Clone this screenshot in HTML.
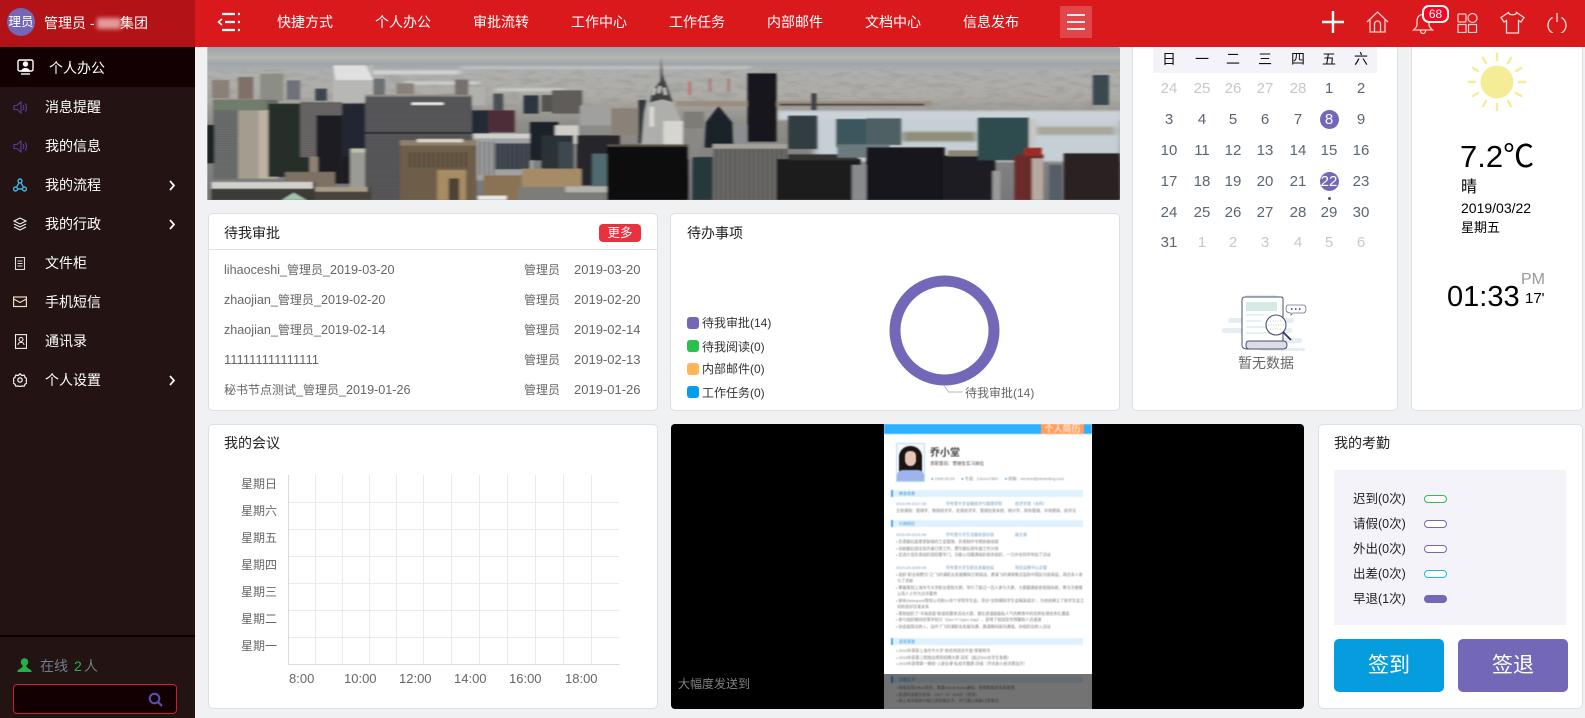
<!DOCTYPE html>
<html lang="zh-CN"><head><meta charset="utf-8"><title>个人办公</title>
<style>
*{box-sizing:border-box;margin:0;padding:0}
html,body{width:1585px;height:718px;overflow:hidden;background:#f0f1f3}
body{position:relative;font-family:"Liberation Sans","Noto Sans CJK SC",sans-serif;font-size:14px;color:#000}
.t{position:absolute;white-space:nowrap;line-height:20px;height:20px}
.a{position:absolute}
.card{position:absolute;background:#fff;border:1px solid #dcdfe3;border-radius:5px}
.side{color:#fff;font-size:14px}
.nav{color:#fff;font-size:14px;top:12px}
.g{color:#666;font-size:12.6px}.g i{font-style:normal;font-size:12px}
.c{position:absolute;width:32px;text-align:center;font-size:15px;line-height:20px;height:20px;color:#5b6670}
.o{color:#c8c8c8}
.h{color:#111}
.pill{position:absolute;left:1424px;width:23px;height:8px;border-radius:4px;border:1px solid;background:#fff}
.k{position:absolute;left:1353px;font-size:12.5px;line-height:20px;color:#222;white-space:nowrap}
.yl{position:absolute;left:241px;font-size:12px;color:#666;line-height:20px;white-space:nowrap}
.xl{position:absolute;top:669px;font-size:13px;color:#666;line-height:20px}
.leg{position:absolute;left:687px;width:12px;height:12px;border-radius:3px}
.legt{position:absolute;left:702px;font-size:12px;color:#333;line-height:20px;white-space:nowrap}
.r{position:absolute;font-size:4px;line-height:6px;color:#777;white-space:nowrap}
.sec{position:absolute;left:7px;width:192px;height:7px;background:#dff1fd;border-left:2px solid #43a8ee;color:#3d93d6;font-size:4px;line-height:7px;padding-left:6px}
</style></head><body>

<!-- banner -->
<svg class="a" style="left:205px;top:45px" width="915" height="155" viewBox="0 0 1577 465" preserveAspectRatio="none">
<defs>
<linearGradient id="sky" x1="0" y1="0" x2="0" y2="1"><stop offset="0" stop-color="#9da3a7"/><stop offset=".07" stop-color="#b4b6b4"/><stop offset=".11" stop-color="#a0a5a8"/><stop offset=".16" stop-color="#aeb0af"/><stop offset=".32" stop-color="#aeaca6"/><stop offset=".5" stop-color="#8f8d88"/><stop offset="1" stop-color="#77767a"/></linearGradient>
<filter id="nz" x="0" y="0" width="100%" height="100%"><feTurbulence type="fractalNoise" baseFrequency=".035 .07" numOctaves="3" seed="4"/><feColorMatrix values="0 0 0 0 .3  0 0 0 0 .28  0 0 0 0 .26  3 0 0 0 -1.300"/><feGaussianBlur stdDeviation="1.500 1"/></filter>
<filter id="bl"><feGaussianBlur stdDeviation="2.400 1.400"/></filter>
<filter id="bl2"><feGaussianBlur stdDeviation="6 3"/></filter>
<pattern id="st" width="6" height="7" patternUnits="userSpaceOnUse"><rect width="6" height="2.500" fill="#000" opacity=".22"/></pattern>
<pattern id="vs" width="8" height="6" patternUnits="userSpaceOnUse"><rect width="3" height="6" fill="#000" opacity=".3"/></pattern>
</defs>
<rect x="2" y="6" width="1575" height="459" rx="4" fill="url(#sky)"/>
<rect x="2" y="72" width="1575" height="130" fill="#000" filter="url(#nz)" opacity=".4"/>
<g filter="url(#bl2)"><rect x="280" y="76" width="160" height="12" fill="#d3d5d5"/><rect x="440" y="64" width="500" height="8" fill="#c4c5c2"/><rect x="345" y="110" width="130" height="8" fill="#d0d4d4"/><rect x="500" y="130" width="120" height="8" fill="#d0d2d0"/><rect x="985" y="197" width="600" height="28" fill="#cbd3d8"/><rect x="1050" y="225" width="530" height="125" fill="#c5cfd4"/><rect x="1200" y="260" width="130" height="30" fill="#8e8f78"/><rect x="1430" y="245" width="140" height="25" fill="#a9a79b"/></g>
<g filter="url(#bl)">
<rect x="812" y="168" width="440" height="16" fill="#9b8f82"/><rect x="990" y="176" width="250" height="6" fill="#454b49"/><rect x="1045" y="145" width="9" height="50" fill="#3a4044"/>
<rect x="57" y="96" width="26" height="66" fill="#7f7068"/><rect x="95" y="86" width="40" height="82" fill="#8c8e85"/><rect x="141" y="106" width="23" height="58" fill="#6e7178"/><rect x="190" y="131" width="20" height="36" fill="#3c4550"/><rect x="12" y="105" width="30" height="55" fill="#8a8078"/>
<rect x="221" y="61" width="69" height="110" fill="#b7b8b6"/><path d="M221 61h56l13 44h-65z" fill="#e0e0e0"/>
<rect x="290" y="101" width="20" height="50" fill="#6d6f73"/><rect x="330" y="115" width="30" height="32" fill="#8a807a"/><rect x="431" y="104" width="23" height="48" fill="#74706e"/><rect x="454" y="126" width="29" height="55" fill="#b2b0ac"/>
<rect x="497" y="146" width="17" height="50" fill="#4a4f55"/><rect x="549" y="151" width="26" height="55" fill="#2f3640"/><rect x="580" y="150" width="18" height="50" fill="#55524f"/><rect x="598" y="136" width="52" height="70" fill="#5f5c5a"/><rect x="646" y="181" width="55" height="60" fill="#a0a09e"/><rect x="700" y="190" width="48" height="80" fill="#8a8278"/>
<rect x="14" y="164" width="112" height="237" fill="#6f7272"/><rect x="14" y="164" width="112" height="237" fill="url(#st)"/><rect x="57" y="195" width="50" height="206" fill="#a39c8f"/><rect x="92" y="195" width="34" height="206" fill="#bcb2a0"/><rect x="14" y="164" width="92" height="32" fill="#6f7c6c"/>
<rect x="2" y="240" width="14" height="115" fill="#1e2024"/>
<rect x="109" y="176" width="81" height="220" fill="#262d2a"/>
<rect x="164" y="171" width="72" height="165" fill="#6e6b6a"/><rect x="164" y="171" width="72" height="165" fill="url(#st)"/>
<rect x="192" y="211" width="44" height="205" fill="#1b1e22"/><rect x="236" y="176" width="43" height="160" fill="#222630"/><rect x="236" y="336" width="16" height="80" fill="#1b1e22"/>
<rect x="250" y="311" width="37" height="115" fill="#9a9b95"/><rect x="252" y="311" width="30" height="12" fill="#b9c2a8"/>
<rect x="180" y="335" width="15" height="55" fill="#8f8071"/><rect x="138" y="381" width="86" height="45" fill="#7d7163"/>
<rect x="276" y="151" width="184" height="314" fill="#5c5c5e"/><rect x="276" y="151" width="184" height="314" fill="url(#st)"/><rect x="276" y="149" width="184" height="6" fill="#8f8a80"/><rect x="276" y="262" width="184" height="4" fill="#1e1e20"/><rect x="356" y="172" width="55" height="8" fill="#e6e6e6"/>
<rect x="460" y="196" width="30" height="70" fill="#232a34"/><rect x="488" y="196" width="46" height="66" fill="#4d2f37"/>
<rect x="463" y="266" width="103" height="140" fill="#a0a2a3"/><rect x="463" y="266" width="103" height="14" fill="#cfcfcb"/><rect x="500" y="295" width="60" height="78" fill="#2f3a42" opacity=".8"/><rect x="500" y="295" width="60" height="78" fill="url(#vs)"/><rect x="463" y="290" width="37" height="100" fill="url(#vs)"/>
<rect x="560" y="231" width="49" height="115" fill="#1f242c"/><rect x="603" y="241" width="41" height="55" fill="#cfcdc6"/><rect x="580" y="271" width="55" height="105" fill="#2a3036"/><rect x="609" y="290" width="26" height="80" fill="#3e4750"/>
<rect x="641" y="271" width="74" height="150" fill="#25272b"/><rect x="667" y="326" width="28" height="100" fill="#4f6a70"/>
<rect x="336" y="286" width="132" height="179" fill="#6d5d49"/><rect x="336" y="286" width="132" height="16" fill="#8d7f6c"/><rect x="365" y="282" width="80" height="10" fill="#d7d2c8"/><rect x="350" y="322" width="105" height="45" fill="url(#vs)"/><rect x="400" y="375" width="50" height="90" fill="#a68c62"/><rect x="420" y="400" width="18" height="65" fill="#4e4234"/>
<rect x="480" y="391" width="89" height="74" fill="#8a7355"/><rect x="546" y="371" width="103" height="60" fill="#a58c66"/><rect x="540" y="426" width="201" height="39" fill="#7c7c7a"/><rect x="621" y="424" width="120" height="18" fill="#b4b2ac"/>
<rect x="470" y="452" width="50" height="13" fill="#e8e8e4"/>
<rect x="747" y="165" width="22" height="130" fill="#33373b"/>
<path d="M786 36l3 55 9 40 8 40 16 60v72H752l5-100 10-80 14-32z" fill="#aeaeac"/><path d="M786 36l3 55 9 40 8 40-18 -8-22 10 4-33 14-32z" fill="#3f4242"/><path d="M772 150l4-20M782 145l2-22M794 150l-3-22" stroke="#c8c8c4" stroke-width="5"/><rect x="790" y="228" width="34" height="70" fill="#d6d5d0"/><rect x="766" y="185" width="8" height="60" fill="#d8d8d4"/>
<rect x="828" y="246" width="22" height="95" fill="#8a8885"/><rect x="825" y="200" width="35" height="50" fill="#7e7c76"/>
<path d="M885 183l24 50 2 75h-50l2-75z" fill="#1e2229"/>
<rect x="935" y="85" width="50" height="205" fill="#15181c"/><rect x="833" y="110" width="5" height="40" fill="#c85a5a" opacity=".7"/><rect x="868" y="100" width="5" height="40" fill="#a96a6a" opacity=".7"/><rect x="900" y="100" width="5" height="40" fill="#a96a6a" opacity=".7"/>
<rect x="1005" y="212" width="50" height="100" fill="#303c42"/><rect x="912" y="240" width="22" height="60" fill="#8b8d90"/>
<rect x="1088" y="222" width="52" height="85" fill="#3a565b"/><rect x="1140" y="220" width="60" height="80" fill="#4f6165"/>
<rect x="693" y="301" width="140" height="164" fill="#0e0e11"/><rect x="693" y="298" width="140" height="7" fill="#57534a"/>
<rect x="840" y="336" width="36" height="129" fill="#25393a"/>
<rect x="875" y="297" width="128" height="168" fill="#6f6e6c"/><rect x="875" y="297" width="128" height="168" fill="url(#vs)"/><rect x="875" y="297" width="128" height="14" fill="#a5a29a"/>
<rect x="985" y="342" width="145" height="123" fill="#1b1b1d"/><rect x="1005" y="328" width="120" height="18" fill="#32302e"/><rect x="1090" y="298" width="90" height="40" fill="#6c7a7e"/><rect x="1115" y="360" width="25" height="105" fill="#888b8e"/>
<rect x="1140" y="307" width="135" height="158" fill="#15161a"/><rect x="1272" y="332" width="90" height="133" fill="#1d1e22"/><rect x="1280" y="316" width="55" height="18" fill="#8c8678"/><rect x="1357" y="378" width="14" height="87" fill="#9a9a9a"/>
<rect x="1332" y="218" width="88" height="128" fill="#2d4c4e"/><rect x="1420" y="222" width="12" height="105" fill="#c5c7c4"/>
<rect x="1395" y="328" width="50" height="137" fill="#6a2c2c"/><rect x="1412" y="308" width="30" height="25" fill="#9c2b25"/><rect x="1425" y="340" width="20" height="125" fill="#b5a9a0"/>
<rect x="1455" y="360" width="22" height="105" fill="#555d66"/><rect x="1480" y="325" width="97" height="140" fill="#2a2224"/><rect x="1530" y="90" width="28" height="90" fill="#3b4a50"/>
<rect x="11" y="411" width="179" height="54" fill="#3a3a38"/><rect x="11" y="411" width="175" height="20" fill="#d2d0ca"/><rect x="190" y="426" width="97" height="39" fill="#4a423a"/><rect x="190" y="426" width="90" height="14" fill="#a89c88"/>
<path d="M132 465l21-22 22 22z" fill="#a3c3a9"/>
</g>
<rect x="0" y="6" width="4" height="459" fill="#f0f1f3"/>
</svg>

<!-- sidebar -->
<div class="a" style="left:0;top:0;width:195px;height:718px;background:#231313"></div>
<div class="a" style="left:0;top:47px;width:195px;height:40px;background:#120002"></div>
<div class="a" style="left:0;top:635px;width:195px;height:2px;background:#120002"></div>

<!-- top bar -->
<div class="a" style="left:195px;top:0;width:1390px;height:47px;background:#da191d"></div>
<div class="a" style="left:0;top:0;width:195px;height:47px;background:#b31317"></div>
<div class="a" style="left:7px;top:8px;width:28px;height:28px;border-radius:50%;background:#7367b8;color:#fff;font-size:12.5px;line-height:28px;text-align:center;white-space:nowrap">理员</div>
<div class="t" style="left:44px;top:13px;color:#fff;font-size:14px">管理员 -</div>
<div class="a" style="left:97px;top:18px;width:24px;height:11px;background:#e49a9a;filter:blur(2px)"></div>
<div class="t" style="left:120px;top:13px;color:#fff;font-size:14px">集团</div>

<svg class="a" style="left:217px;top:12px" width="24" height="20" viewBox="0 0 24 20" fill="none" stroke="#fff" stroke-width="2.200"><path d="M5 2h13M8 10h10M5 18h13M21 2h2M21 10h2M21 18h2"/><path d="M5 7l-3.500 3L5 13" stroke-width="1.600"/></svg>
<div class="t nav" style="left:277px">快捷方式</div><div class="t nav" style="left:375px">个人办公</div><div class="t nav" style="left:473px">审批流转</div><div class="t nav" style="left:571px">工作中心</div><div class="t nav" style="left:669px">工作任务</div><div class="t nav" style="left:767px">内部邮件</div><div class="t nav" style="left:865px">文档中心</div><div class="t nav" style="left:963px">信息发布</div>
<div class="a" style="left:1060px;top:6px;width:32px;height:32px;background:rgba(255,255,255,.2)"></div>
<svg class="a" style="left:1066px;top:13px" width="20" height="18" fill="none" stroke="#fff" stroke-width="1.700"><path d="M1 2h18M1 9h18M1 16h18"/></svg>
<svg class="a" style="left:1322px;top:11px" width="22" height="22" stroke="#fff" stroke-width="2.400"><path d="M0 11h22M11 0v22"/></svg>
<svg class="a" style="left:1366px;top:11px" width="23" height="22" viewBox="0 0 23 22" fill="none" stroke="#f7cfd0" stroke-width="1.300"><path d="M1 11L11.500 1 22 11M4 8.500V21h15V8.500M8.500 21v-8a3 3 0 0 1 6 0v8"/></svg>
<svg class="a" style="left:1412px;top:12px" width="22" height="23" viewBox="0 0 22 23" fill="none" stroke="#f7cfd0" stroke-width="1.300"><path d="M11 2.500c-4 0-6 3-6 6.500v4c0 2-2 3.500-3.500 5h19c-1.500-1.500-3.500-3-3.500-5V9c0-3.500-2-6.500-6-6.500zM8.500 18.500c0 4 5 4 5 0"/></svg>
<div class="a" style="left:1422px;top:5px;width:27px;height:18px;background:#ff0022;border:2px solid #fff;border-radius:7px;color:#fff;font-size:12px;line-height:14px;text-align:center">68</div>
<svg class="a" style="left:1457px;top:12px" width="21" height="21" fill="none" stroke="#f7cfd0" stroke-width="1.200"><rect x="1" y="2" width="8" height="8" rx="1"/><circle cx="15.500" cy="6" r="4.500"/><rect x="1" y="12.500" width="8" height="8"/><rect x="11.500" y="12.500" width="8" height="8"/></svg>
<svg class="a" style="left:1500px;top:11px" width="25" height="23" viewBox="0 0 25 23" fill="none" stroke="#f9dcdc" stroke-width="1.300"><path d="M8.500 1.500L1 6.500l3 4.500 2.500-1.500V22h12V9.500L21 11l3-4.500-7.500-5c-.5 3-7.500 3-8 0z"/></svg>
<svg class="a" style="left:1547px;top:12px" width="20" height="21" fill="none" stroke="#f9dcdc" stroke-width="1.300"><path d="M5.500 5.500a9 9 0 1 0 9 0M10 1v9"/></svg>

<!-- side menu -->
<svg class="a" style="left:17px;top:59px" width="17" height="16" fill="none" stroke="#fff" stroke-width="1.400"><rect x="1" y="1" width="15" height="11" rx="1.500"/><circle cx="8.500" cy="5" r="2" fill="#fff"/><path d="M5 12c0-3 7-3 7 0z" fill="#fff"/><path d="M4 15h9"/></svg>
<div class="t side" style="left:49px;top:58px">个人办公</div>
<svg class="a" style="left:13px;top:101px" width="15" height="13" fill="none" stroke="#5a3d9c" stroke-width="1.100"><path d="M1 4.500h3L8 1v11L4 8.500H1zM10 4c1 1.500 1 3.500 0 5M12 2.500c2 2 2 6 0 8"/></svg>
<div class="t side" style="left:45px;top:97px">消息提醒</div>
<svg class="a" style="left:13px;top:140px" width="15" height="13" fill="none" stroke="#5a3d9c" stroke-width="1.100"><path d="M1 4.500h3L8 1v11L4 8.500H1zM10 4c1 1.500 1 3.500 0 5M12 2.500c2 2 2 6 0 8"/></svg>
<div class="t side" style="left:45px;top:136px">我的信息</div>
<svg class="a" style="left:13px;top:178px" width="14" height="14" fill="none" stroke="#3fb4e8" stroke-width="1.400"><path d="M7 3L2.500 11h9z"/><circle cx="7" cy="3" r="2" fill="#231313"/><circle cx="2.500" cy="11" r="2" fill="#231313"/><circle cx="11.500" cy="11" r="2" fill="#231313"/></svg>
<div class="t side" style="left:45px;top:175px">我的流程</div>
<svg class="a" style="left:168px;top:180px" width="8" height="11" fill="none" stroke="#fff" stroke-width="1.700"><path d="M2 1l4 4.500L2 10"/></svg>
<svg class="a" style="left:13px;top:217px" width="14" height="14" fill="none" stroke="#eee" stroke-width="1.100"><path d="M7 1l6 3-6 3-6-3zM1 7l6 3 6-3M1 10l6 3 6-3"/></svg>
<div class="t side" style="left:45px;top:214px">我的行政</div>
<svg class="a" style="left:168px;top:219px" width="8" height="11" fill="none" stroke="#fff" stroke-width="1.700"><path d="M2 1l4 4.500L2 10"/></svg>
<svg class="a" style="left:14px;top:257px" width="12" height="13" fill="none" stroke="#ddd" stroke-width="1.100"><rect x="1.500" y=".5" width="9" height="12"/><path d="M3.500 4h5M3.500 6.500h5M3.500 9h5"/></svg>
<div class="t side" style="left:45px;top:253px">文件柜</div>
<svg class="a" style="left:13px;top:296px" width="14" height="12" fill="none" stroke="#f0dcc0" stroke-width="1.200"><rect x=".6" y="1" width="12.800" height="9.500"/><path d="M.6 3l6.400 3.500L13.400 3"/></svg>
<div class="t side" style="left:45px;top:292px">手机短信</div>
<svg class="a" style="left:14px;top:334px" width="13" height="15" fill="none" stroke="#eee" stroke-width="1.100"><rect x="1.500" y=".6" width="11" height="13.800"/><circle cx="7" cy="5.500" r="2"/><path d="M4 11c0-3.500 6-3.500 6 0"/></svg>
<div class="t side" style="left:45px;top:331px">通讯录</div>
<svg class="a" style="left:13px;top:373px" width="14" height="14" fill="none" stroke="#eee" stroke-width="1.300"><path d="M7 .8l1.800 1.600 2.400-.2.900 2.200L14 5.800 13.200 8l.8 1.700-1.900 1.500-.9 1.900-2.400-.1L7 13.600 5.200 13l-2.400.1-.9-1.900L0 9.700.8 8 0 5.800l1.900-1.400.9-2.200 2.400.2z"/><circle cx="7" cy="7" r="2.200"/></svg>
<div class="t side" style="left:45px;top:370px">个人设置</div>
<svg class="a" style="left:168px;top:375px" width="8" height="11" fill="none" stroke="#fff" stroke-width="1.700"><path d="M2 1l4 4.500L2 10"/></svg>

<svg class="a" style="left:17px;top:658px" width="15" height="14" fill="#22b14c"><circle cx="7.500" cy="4" r="3.800"/><path d="M5.500 6.500h4V9l5 3.500V14H.5v-1.500l5-3.500z"/></svg>
<div class="t" style="left:40px;top:656px;color:#6f7e8c;font-size:14px">在线</div>
<div class="t" style="left:74px;top:656px;color:#22b14c;font-size:14px">2</div>
<div class="t" style="left:84px;top:656px;color:#6f7e8c;font-size:14px">人</div>
<div class="a" style="left:13px;top:684px;width:164px;height:30px;background:#120002;border:1px solid #c8232c;border-radius:4px"></div>
<svg class="a" style="left:148px;top:692px" width="15" height="15" fill="none" stroke="#5c4fb0" stroke-width="2"><circle cx="6.500" cy="6.500" r="4.800"/><path d="M10 10l4 4"/></svg>

<!-- 待我审批 -->
<div class="card" style="left:208px;top:213px;width:450px;height:198px"></div>
<div class="t" style="left:224px;top:223px;font-size:14px;color:#222">待我审批</div>
<div class="a" style="left:208px;top:249px;width:450px;height:1px;background:#dcdfe3"></div>
<div class="a" style="left:599px;top:224px;width:42px;height:18px;background:#e8333e;border-radius:4px;color:#fff;font-size:12.500px;line-height:18px;text-align:center">更多</div>
<div class="t g" style="left:224px;top:260px">lihaoceshi_<i>管理员</i>_2019-03-20</div><div class="t g" style="left:524px;top:260px"><i>管理员</i></div><div class="t g" style="left:574px;top:260px;font-size:13px">2019-03-20</div>
<div class="t g" style="left:224px;top:290px">zhaojian_<i>管理员</i>_2019-02-20</div><div class="t g" style="left:524px;top:290px"><i>管理员</i></div><div class="t g" style="left:574px;top:290px;font-size:13px">2019-02-20</div>
<div class="t g" style="left:224px;top:320px">zhaojian_<i>管理员</i>_2019-02-14</div><div class="t g" style="left:524px;top:320px"><i>管理员</i></div><div class="t g" style="left:574px;top:320px;font-size:13px">2019-02-14</div>
<div class="t g" style="left:224px;top:350px;font-size:13px">111111111111111</div><div class="t g" style="left:524px;top:350px"><i>管理员</i></div><div class="t g" style="left:574px;top:350px;font-size:13px">2019-02-13</div>
<div class="t g" style="left:224px;top:380px"><i>秘书节点测试</i>_<i>管理员</i>_2019-01-26</div><div class="t g" style="left:524px;top:380px"><i>管理员</i></div><div class="t g" style="left:574px;top:380px;font-size:13px">2019-01-26</div>

<!-- 待办事项 -->
<div class="card" style="left:670px;top:213px;width:450px;height:198px"></div>
<div class="t" style="left:687px;top:223px;font-size:14px;color:#222">待办事项</div>
<div class="leg" style="top:317px;background:#7367b8"></div><div class="legt" style="top:313px">待我审批(14)</div>
<div class="leg" style="top:340px;background:#28c04e"></div><div class="legt" style="top:337px">待我阅读(0)</div>
<div class="leg" style="top:363px;background:#ffb653"></div><div class="legt" style="top:359px">内部邮件(0)</div>
<div class="leg" style="top:386px;background:#069ded"></div><div class="legt" style="top:383px">工作任务(0)</div>
<svg class="a" style="left:885px;top:270px" width="120" height="125" fill="none"><circle cx="59.500" cy="60.500" r="49.500" stroke="#7367b8" stroke-width="11"/><path d="M59.500 116l4 6h14" stroke="#b9b3dc" stroke-width="1"/></svg>
<div class="t" style="left:965px;top:383px;font-size:12px;color:#666">待我审批(14)</div>

<!-- calendar -->
<div class="card" style="left:1132px;top:47px;width:266px;height:364px;border-top:0;border-radius:0 0 5px 5px"></div>
<div class="a" style="left:1153px;top:47px;width:224px;height:26px;background:#f3f3f9"></div>
<div class="c h" style="left:1153px;top:49px;font-size:14px">日</div><div class="c h" style="left:1186px;top:49px;font-size:14px">一</div><div class="c h" style="left:1217px;top:49px;font-size:14px">二</div><div class="c h" style="left:1249px;top:49px;font-size:14px">三</div><div class="c h" style="left:1282px;top:49px;font-size:14px">四</div><div class="c h" style="left:1313px;top:49px;font-size:14px">五</div><div class="c h" style="left:1345px;top:49px;font-size:14px">六</div>

<div class="c o" style="left:1153px;top:79px">24</div><div class="c o" style="left:1186px;top:79px">25</div><div class="c o" style="left:1217px;top:79px">26</div><div class="c o" style="left:1249px;top:79px">27</div><div class="c o" style="left:1282px;top:79px">28</div><div class="c" style="left:1313px;top:79px">1</div><div class="c" style="left:1345px;top:79px">2</div>
<div class="c" style="left:1153px;top:110px">3</div><div class="c" style="left:1186px;top:110px">4</div><div class="c" style="left:1217px;top:110px">5</div><div class="c" style="left:1249px;top:110px">6</div><div class="c" style="left:1282px;top:110px">7</div>
<div class="a" style="left:1319.500px;top:109.500px;width:19px;height:19px;border-radius:50%;background:#7367b8;color:#fff;text-align:center;font-size:15px;line-height:19px">8</div><div class="c" style="left:1345px;top:110px">9</div>
<div class="c" style="left:1153px;top:141px">10</div><div class="c" style="left:1186px;top:141px">11</div><div class="c" style="left:1217px;top:141px">12</div><div class="c" style="left:1249px;top:141px">13</div><div class="c" style="left:1282px;top:141px">14</div><div class="c" style="left:1313px;top:141px">15</div><div class="c" style="left:1345px;top:141px">16</div>
<div class="c" style="left:1153px;top:172px">17</div><div class="c" style="left:1186px;top:172px">18</div><div class="c" style="left:1217px;top:172px">19</div><div class="c" style="left:1249px;top:172px">20</div><div class="c" style="left:1282px;top:172px">21</div>
<div class="a" style="left:1319.500px;top:171.500px;width:19px;height:19px;border-radius:50%;background:#7367b8;color:#fff;text-align:center;font-size:15px;line-height:19px">22</div><div class="c" style="left:1345px;top:172px">23</div>
<div class="a" style="left:1327.500px;top:197px;width:3px;height:3px;border-radius:50%;background:#555"></div>
<div class="c" style="left:1153px;top:203px">24</div><div class="c" style="left:1186px;top:203px">25</div><div class="c" style="left:1217px;top:203px">26</div><div class="c" style="left:1249px;top:203px">27</div><div class="c" style="left:1282px;top:203px">28</div><div class="c" style="left:1313px;top:203px">29</div><div class="c" style="left:1345px;top:203px">30</div>
<div class="c" style="left:1153px;top:233px">31</div><div class="c o" style="left:1186px;top:233px">1</div><div class="c o" style="left:1217px;top:233px">2</div><div class="c o" style="left:1249px;top:233px">3</div><div class="c o" style="left:1282px;top:233px">4</div><div class="c o" style="left:1313px;top:233px">5</div><div class="c o" style="left:1345px;top:233px">6</div>

<svg class="a" style="left:1220px;top:290px" width="90" height="64" fill="none">
<g fill="#e4eef1"><rect x="25" y="5" width="32" height="3" rx="1.500"/><rect x="8" y="28" width="66" height="5" rx="2.500"/><rect x="2" y="38" width="70" height="5" rx="2.500"/><rect x="60" y="48" width="22" height="5" rx="2.500"/><rect x="40" y="58" width="40" height="3" rx="1.500"/><rect x="80" y="58" width="5" height="3" rx="1.500"/></g>
<path d="M22 10q0-3 3-3h36q2 0 2 2v50H27q-5 0-5-4z" fill="#fff" stroke="#4a4f78" stroke-width="1"/>
<rect x="26" y="12" width="31" height="9" fill="#d5e9e5"/><path d="M26 25h18M26 31h15M26 37h22M26 43h28" stroke="#d5e9e5" stroke-width="1.300"/>
<path d="M29 59q-3 0-3-4t3-4h34q4 0 4 4t-4 4z" fill="#dcdce4" stroke="#4a4f78" stroke-width="1"/>
<circle cx="56" cy="35" r="10" fill="#fff" stroke="#4a4f78" stroke-width="1.100"/><path d="M50 31h12M48 35h16M50 39h12" stroke="#ccc" stroke-dasharray="1 1.500"/><path d="M63 42l8 8" stroke="#30345c" stroke-width="1.800"/>
<path d="M68 15h15q3 0 3 4t-3 4H73l-2 2v-2q-5 0-5-4t2-4z" fill="#fff" stroke="#6a6e90" stroke-width=".8"/><path d="M71 19h1.500M75 19h1.500M79 19h1.500" stroke="#30345c" stroke-width="1.500"/>
</svg>
<div class="t" style="left:1238px;top:353px;font-size:14px;color:#666">暂无数据</div>

<!-- weather -->
<div class="card" style="left:1411px;top:47px;width:172px;height:364px;border-top:0;border-radius:0 0 5px 5px"></div>
<svg class="a" style="left:1467px;top:52px" width="60" height="60" fill="none" stroke="#f5ec97" stroke-width="2.400" stroke-linecap="round"><circle cx="30" cy="30" r="16.500" fill="#f5ec97" stroke="none"/><path d="M30 2v6M30 52v6M2 30h6M52 30h6M16 5.800l3 5.200M41 49l3 5.200M5.800 16l5.200 3M49 41l5.200 3M44 5.800l-3 5.200M19 49l-3 5.200M54.200 16l-5.200 3M11 41l-5.200 3"/></svg>
<div class="a" style="left:1460px;top:137px;font-size:31px;line-height:40px;color:#000;white-space:nowrap">7.2℃</div>
<div class="t" style="left:1461px;top:178px;font-size:16px">晴</div>
<div class="t" style="left:1461px;top:198px;font-size:14px">2019/03/22</div>
<div class="t" style="left:1461px;top:218px;font-size:13px">星期五</div>
<div class="a" style="left:1447px;top:277px;font-size:29px;line-height:40px;white-space:nowrap">01:33</div>
<div class="t" style="left:1521px;top:270px;font-size:16px;color:#999">PM</div>
<div class="t" style="left:1525px;top:289px;font-size:15px">17'</div>

<!-- 我的会议 -->
<div class="card" style="left:208px;top:424px;width:450px;height:285px"></div>
<div class="t" style="left:224px;top:433px;font-size:14px;color:#222">我的会议</div>
<svg class="a" style="left:288px;top:475px" width="332" height="191" fill="none" stroke="#e8ebee" stroke-width="1">
<path d="M0 27.500h331M0 54.500h331M0 81.500h331M0 108.500h331M0 135.500h331M0 162.500h331"/>
<path d="M27.500 0v189M54.500 0v189M81.500 0v189M108.500 0v189M135.500 0v189M163.500 0v189M191.500 0v189M219.500 0v189M247.500 0v189M275.500 0v189M303.500 0v189"/>
<path d="M.5 0v189.500h331" stroke="#d9dcdf"/></svg>
<div class="yl" style="top:474px">星期日</div><div class="yl" style="top:501px">星期六</div><div class="yl" style="top:528px">星期五</div><div class="yl" style="top:555px">星期四</div><div class="yl" style="top:582px">星期三</div><div class="yl" style="top:609px">星期二</div><div class="yl" style="top:636px">星期一</div>
<div class="xl" style="left:289px">8:00</div><div class="xl" style="left:344px">10:00</div><div class="xl" style="left:399px">12:00</div><div class="xl" style="left:454px">14:00</div><div class="xl" style="left:509px">16:00</div><div class="xl" style="left:565px">18:00</div>

<!-- video -->
<div class="a" style="left:671px;top:424px;width:633px;height:285px;background:#000;border-radius:4px"></div>
<div class="a" style="left:884px;top:424px;width:208px;height:285px;background:#fff;overflow:hidden">
<div style="position:absolute;inset:0;filter:blur(.45px)">
<div class="a" style="left:0;top:0;width:208px;height:10px;background:#2db1ff"></div>
<div class="a" style="left:157px;top:0;width:43px;height:10px;background:#ff9f5f;color:#fff;font-size:9px;line-height:10px;text-align:center;white-space:nowrap">个人简历</div>
<div class="a" style="left:12px;top:19px;width:29px;height:39px;border:1px solid #b9dcfa;background:#f4f7fb;overflow:hidden">
  <div class="a" style="left:2px;top:2px;width:23px;height:30px;background:#1b1414;border-radius:11px 11px 6px 6px"></div>
  <div class="a" style="left:8px;top:7px;width:11px;height:15px;background:#e9c7b6;border-radius:5px 5px 6px 6px"></div>
  <div class="a" style="left:0;top:26px;width:27px;height:12px;background:#9fb4ec;border-radius:6px 6px 0 0"></div>
</div>
<div class="r" style="left:46px;top:24px;font-size:10px;line-height:11px;color:#444;font-weight:bold">乔小堂</div>
<div class="r" style="left:46px;top:37px;font-size:4.500px;color:#444">求职意向：营销生实习岗位</div>
<div class="r" style="left:47px;top:52px;color:#888"><b style="color:#3d93d6">●</b> 1996.09.09 &nbsp; &nbsp; &nbsp;<b style="color:#3d93d6">●</b> 专道：13xxxx7800 &nbsp; &nbsp; &nbsp;<b style="color:#3d93d6">●</b> 邮箱：service@jobsbuting.com</div>

<div class="sec" style="top:66px">教育背景</div>
<div class="r" style="left:12px;top:77px;color:#6a96bf">2013.09-2017.06</div><div class="r" style="left:62px;top:77px;color:#6a96bf">乔布堂大学金融经济与管理学院</div><div class="r" style="left:131px;top:77px;color:#6a96bf">经济学类（本科）</div>
<div class="r" style="left:12px;top:84px">主修课程：管理学、微观经济学、宏观经济学、管理信息系统、统计学、财务管理、市场营销、经济法</div>

<div class="sec" style="top:96px">行政经历</div>
<div class="r" style="left:12px;top:108px;color:#6a96bf">2015.09-2016.06</div><div class="r" style="left:62px;top:108px;color:#6a96bf">乔布堂大学生活服务部办部</div><div class="r" style="left:131px;top:108px;color:#6a96bf">副主席</div>
<div class="r" style="left:12px;top:115px">• 负责御后超食堂联络的工会管理，负责制作专期协商成绩</div>
<div class="r" style="left:12px;top:122px">• 协助御后部全局开展日常工作，撰写御后部年度工作计划</div>
<div class="r" style="left:12px;top:128px">• 定选片双负责组织部招募专门，功能公司圆满组织商务组织，一日并名同学申加了活动</div>

<div class="r" style="left:12px;top:141px;color:#6a96bf">2014.09-2035.06</div><div class="r" style="left:62px;top:141px;color:#6a96bf">乔布堂大学生职业发展协会</div><div class="r" style="left:131px;top:141px;color:#6a96bf">项目运营中心总管</div>
<div class="r" style="left:12px;top:148px">• 组织"职业前瞻月"之"飞利浦职业发展模拟日常挑战，邀请飞利浦销售总监和中国区内部高层，两百余人参</div>
<div class="r" style="left:12px;top:154px">&nbsp;与了讲座</div>
<div class="r" style="left:12px;top:161px">• 筹备策划上海市今大学职业规划大赛，举行了超过一百人参与大赛，大赛圆满前参观独协商，寒冷冷感情</div>
<div class="r" style="left:12px;top:167px">&nbsp;让而人士作为点评嘉宾</div>
<div class="r" style="left:12px;top:174px">• 联系Debeyond等知公司和10余个学院学生会，举办"全院模拟学生会精英组访"，为他创建立了和学生会之</div>
<div class="r" style="left:12px;top:180px">&nbsp;间的良好往来关系</div>
<div class="r" style="left:12px;top:187px">• 策划组织了"书海选拔"联谊招募季活动大赛，邀在途请超级私人气的教育中的培养处理优秀礼遇面</div>
<div class="r" style="left:12px;top:193px">• 参与组织期间优等学校日（Dev IT Open Day），获得了校园宣传预算和人员速递</div>
<div class="r" style="left:12px;top:200px">• 协会面简出转入，运作了飞利浦职业发展沟通，邀请期间高沟通强，并组织出转入活动</div>

<div class="sec" style="top:214px">获奖荣誉</div>
<div class="r" style="left:12px;top:224px">• 2013年荣获上海市今大学"校优秀团员不放"荣誉称号</div>
<div class="r" style="left:12px;top:231px">• 2013年获第三院独自得到招聘大赛 冠军（超过500名学生参赛）</div>
<div class="r" style="left:12px;top:237px">• 2015年获得第一期校"上就业课"私校学霸赛 四强（华讯各小经济赛连开）</div>

<div class="sec" style="top:252px">技能证书</div>
<div class="r" style="left:12px;top:261px">• 熟练运用Office软件，掌握Visual Basic编程，熟悉数据库系统管理</div>
<div class="r" style="left:12px;top:268px">• 英语听说能力优秀：CET－6：624分（优秀）</div>
<div class="r" style="left:12px;top:274px">• 具上海市高校中级口译资格证书，并已通过高级口译笔试</div>
</div>
</div>
<div class="a" style="left:884px;top:674px;width:208px;height:35px;background:rgba(0,0,0,.55)"></div>
<div class="t" style="left:678px;top:674px;font-size:12px;color:#808080">大幅度发送到</div>

<!-- 考勤 -->
<div class="card" style="left:1318px;top:424px;width:265px;height:285px"></div>
<div class="t" style="left:1334px;top:433px;font-size:14px;color:#222">我的考勤</div>
<div class="a" style="left:1334px;top:470px;width:232px;height:155px;background:#f3f3f9"></div>
<div class="k" style="top:489px">迟到(0次)</div><div class="pill" style="top:495px;border-color:#28c04e"></div>
<div class="k" style="top:514px">请假(0次)</div><div class="pill" style="top:520px;border-color:#7367b8"></div>
<div class="k" style="top:539px">外出(0次)</div><div class="pill" style="top:545px;border-color:#7367b8"></div>
<div class="k" style="top:564px">出差(0次)</div><div class="pill" style="top:570px;border-color:#1fb6ea"></div>
<div class="k" style="top:589px">早退(1次)</div><div class="pill" style="top:595px;border-color:#7367b8;background:#7367b8"></div>
<div class="a" style="left:1334px;top:639px;width:110px;height:53px;background:#069ddf;border-radius:5px;color:#fff;font-size:21px;line-height:53px;text-align:center">签到</div>
<div class="a" style="left:1458px;top:639px;width:110px;height:53px;background:#7367b8;border-radius:5px;color:#fff;font-size:21px;line-height:53px;text-align:center">签退</div>

</body></html>
